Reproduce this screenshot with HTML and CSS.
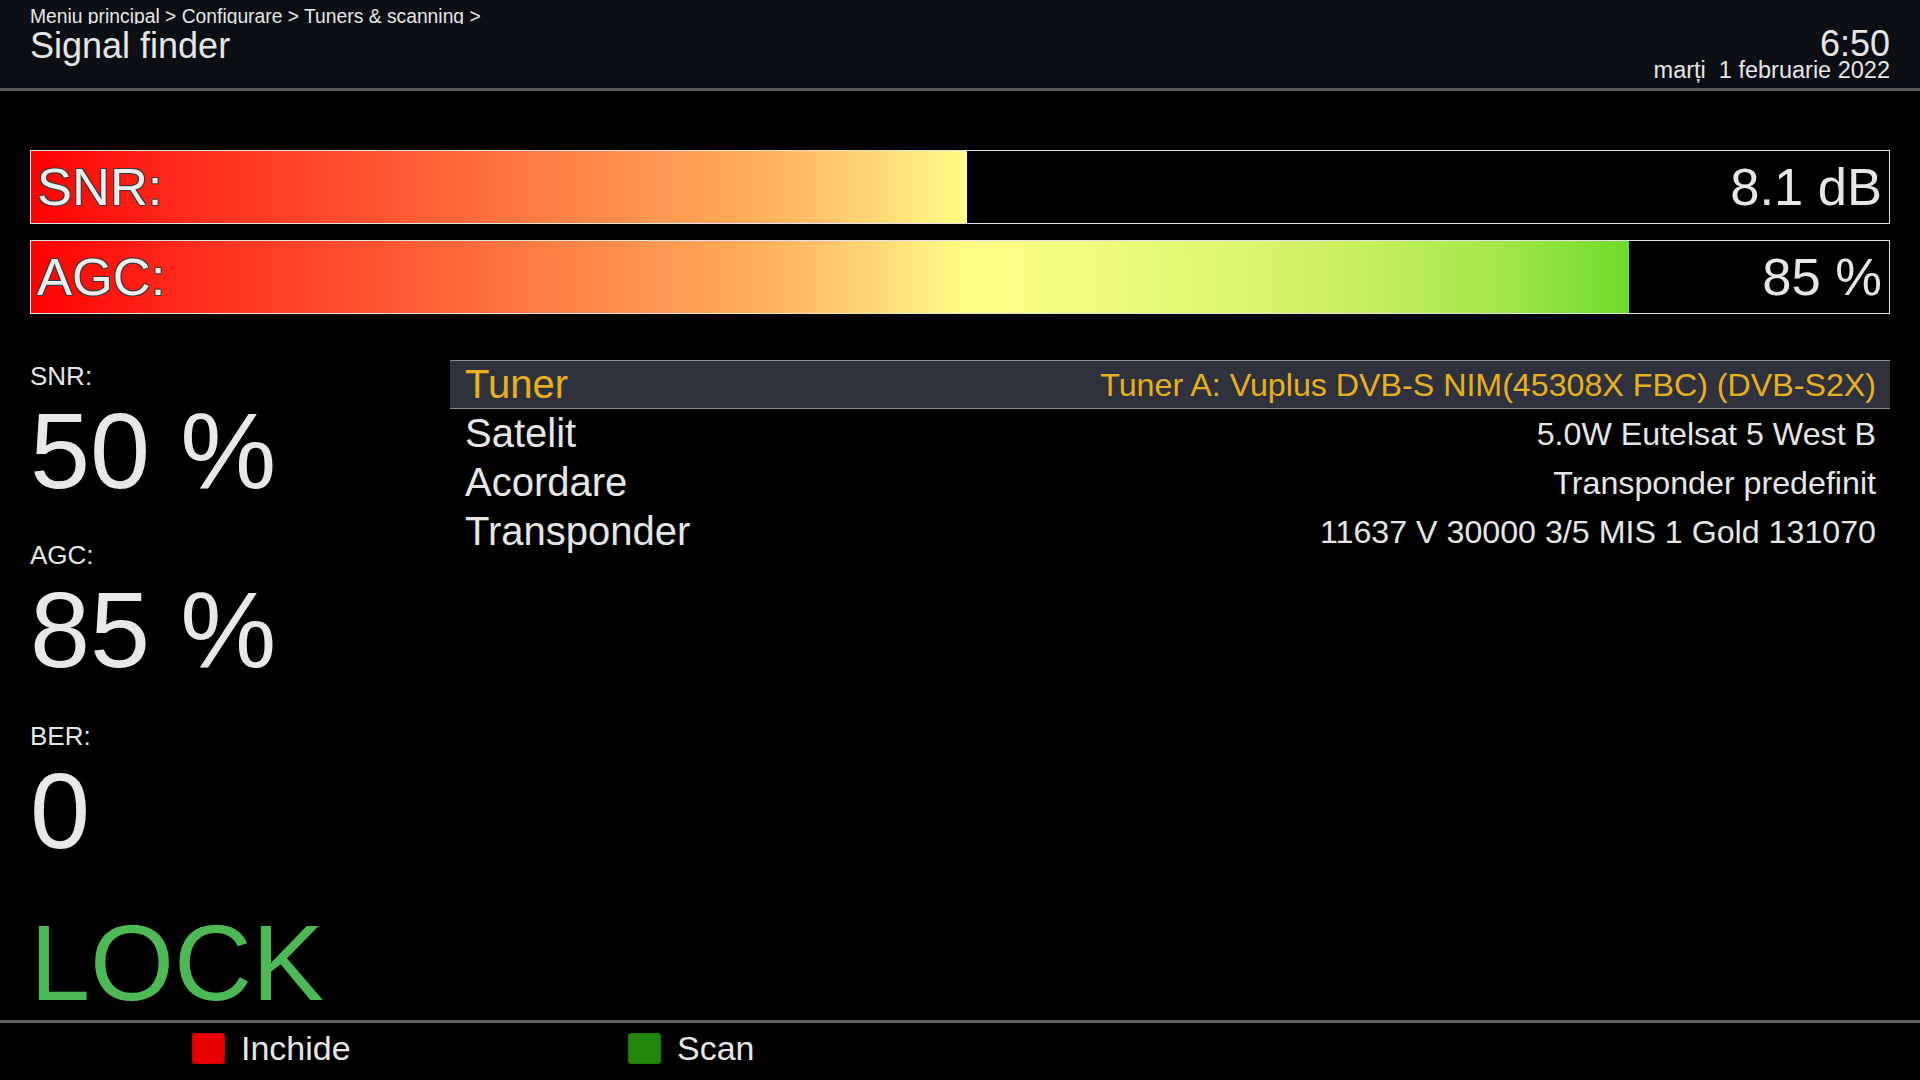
FILE: index.html
```html
<!DOCTYPE html>
<html lang="ro">
<head>
<meta charset="utf-8">
<title>Signal finder</title>
<link rel="stylesheet" href="styles.css">
</head>
<body>
<div class="screen">
  <header class="topbar">
    <div class="titles">
      <div class="crumbs">Meniu principal &gt; Configurare &gt; Tuners &amp; scanning &gt;</div>
      <h1 class="title">Signal finder</h1>
    </div>
    <div class="clock">
      <div class="time">6:50</div>
      <div class="date">marți&nbsp; 1 februarie 2022</div>
    </div>
  </header>

  <main class="content">
    <section class="bars">
      <div class="bar" style="--v:50.4%"><span class="bar-label">SNR:</span><span class="bar-value">8.1 dB</span></div>
      <div class="bar" style="--v:86%"><span class="bar-label">AGC:</span><span class="bar-value">85 %</span></div>
    </section>

    <section class="lower">
      <div class="stats">
        <div class="stat"><div class="stat-label">SNR:</div><div class="stat-value">50 %</div></div>
        <div class="stat"><div class="stat-label">AGC:</div><div class="stat-value">85 %</div></div>
        <div class="stat stat-ber"><div class="stat-label">BER:</div><div class="stat-value">0</div></div>
        <div class="lock">LOCK</div>
      </div>
      <div class="list">
        <div class="row selected"><span class="row-label">Tuner</span><span class="row-value">Tuner A: Vuplus DVB-S NIM(45308X FBC) (DVB-S2X)</span></div>
        <div class="row"><span class="row-label">Satelit</span><span class="row-value">5.0W Eutelsat 5 West B</span></div>
        <div class="row"><span class="row-label">Acordare</span><span class="row-value">Transponder predefinit</span></div>
        <div class="row"><span class="row-label">Transponder</span><span class="row-value">11637 V 30000 3/5 MIS 1 Gold 131070</span></div>
      </div>
    </section>
  </main>

  <footer class="buttons">
    <div class="btn"><span class="key red"></span><span class="btn-text">Inchide</span></div>
    <div class="btn"><span class="key green"></span><span class="btn-text">Scan</span></div>
  </footer>
</div>
</body>
</html>
```

FILE: styles.css
```css
html, body {
  margin: 0;
  padding: 0;
  background: #000;
}

body {
  font-family: "Liberation Sans", Arial, sans-serif;
  color: #e6e6e6;
}

.screen {
  width: 1920px;
  height: 1080px;
  display: flex;
  flex-direction: column;
  overflow: hidden;
}

/* header */
.topbar {
  flex-shrink: 0;
  height: 88px;
  padding: 0 30px;
  background: #0c0e15;
  border-bottom: 3px solid #5a5a5f;
  display: flex;
  justify-content: space-between;
  align-items: flex-start;
}

.titles {
  padding-top: 7px;
}

.crumbs {
  font-size: 19.3px;
  line-height: 19px;
  height: 17px;
  overflow: hidden;
  white-space: nowrap;
}

.title {
  margin: 4px 0 0;
  font-size: 36px;
  line-height: 35px;
  font-weight: normal;
}

.clock {
  padding-top: 29px;
  text-align: right;
}

.time {
  font-size: 36px;
  line-height: 29px;
}

.date {
  font-size: 23.5px;
  line-height: 24px;
  white-space: nowrap;
}

/* main */
.content {
  flex: 1;
  padding: 59px 30px 0;
}

.bars {
  display: flex;
  flex-direction: column;
  gap: 16px;
}

.bar {
  height: 74px;
  box-sizing: border-box;
  border: 1px solid #e2e2e2;
  padding: 0 7px 0 6px;
  display: flex;
  align-items: center;
  justify-content: space-between;
  font-size: 52.5px;
  line-height: 1;
  background:
    linear-gradient(90deg, transparent var(--v), #000 var(--v)),
    linear-gradient(90deg,
      #ff0000 0%,
      #ff2a1c 8%,
      #ff5630 19%,
      #ff8446 29%,
      #ffae5c 39%,
      #ffd474 45%,
      #ffff88 50.5%,
      #eefb7e 58%,
      #cef164 70%,
      #a4e64a 79%,
      #6ddc2c 86%,
      #5ad820 100%);
}

.bar-label {
  color: #ededed;
  text-shadow:
    1px 1px 0 #3a3a3a,
    -1px -1px 0 #3a3a3a,
    1px -1px 0 #3a3a3a,
    -1px 1px 0 #3a3a3a;
}

.bar-value {
  color: #e6e6e6;
}

.lower {
  margin-top: 46px;
  display: grid;
  grid-template-columns: 420px 1fr;
}

.stats {
  padding-top: 1px;
}

.stat + .stat {
  margin-top: 35px;
}

.stat + .stat-ber {
  margin-top: 37px;
}

.stat-label {
  font-size: 26px;
  line-height: 30px;
}

.stat-value {
  margin-top: 6px;
  font-size: 108px;
  line-height: 108px;
  color: #e8e8e8;
  white-space: nowrap;
}

.lock {
  margin-top: 44px;
  font-size: 108px;
  line-height: 108px;
  color: #4cb954;
}

.list {
  display: flex;
  flex-direction: column;
}

.row {
  height: 49px;
  box-sizing: border-box;
  border-top: 1px solid transparent;
  border-bottom: 1px solid transparent;
  padding: 0 14px 0 15px;
  display: flex;
  justify-content: space-between;
  align-items: center;
  white-space: nowrap;
}

.row-label {
  font-size: 40px;
  line-height: 47px;
}

.row-value {
  font-size: 32.2px;
  line-height: 40px;
}

.row.selected {
  background: #2f313d;
  border-color: #8c8c92;
  color: #e8b01c;
}

/* footer */
.buttons {
  flex-shrink: 0;
  height: 51px;
  padding: 0 0 6px 192px;
  border-top: 3px solid #5e5e64;
  display: flex;
  align-items: center;
}

.btn {
  width: 436px;
  display: flex;
  align-items: center;
  gap: 16px;
  font-size: 34px;
}

.key {
  width: 33px;
  height: 31px;
  border-radius: 3px;
  box-shadow: inset 0 0 2px rgba(0, 0, 0, 0.45);
}

.key.red {
  background: #e80000;
}

.key.green {
  background: #23870c;
}
```
